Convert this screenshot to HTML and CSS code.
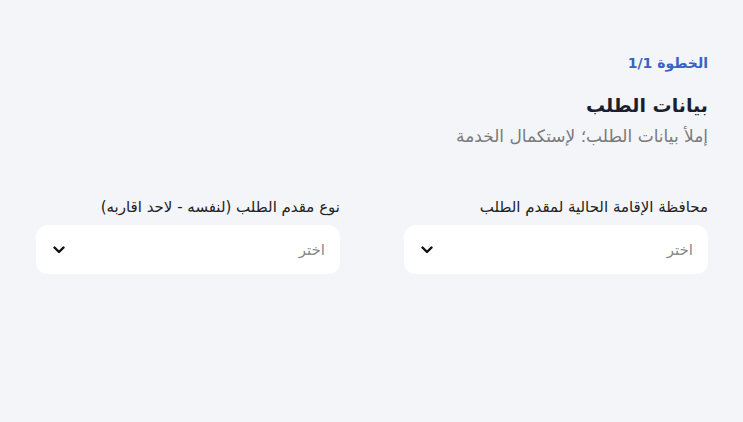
FILE: index.html
```html
<!DOCTYPE html>
<html lang="ar" dir="rtl">
<head>
<meta charset="utf-8">
<link rel="stylesheet" href="styles.css">
</head>
<body>
<main class="page">
  <div class="step">الخطوة 1/1</div>
  <h1 class="title">بيانات الطلب</h1>
  <p class="subtitle">إملأ بيانات الطلب؛ لإستكمال الخدمة</p>
  <div class="fields">
    <div class="field">
      <label class="label">محافظة الإقامة الحالية لمقدم الطلب</label>
      <div class="select">
        <span class="placeholder">اختر</span>
        <svg class="chev" width="12" height="8" viewBox="0 0 12 8"><path d="M1.5 1.5 L6 6 L10.5 1.5" fill="none" stroke="#111" stroke-width="2.4" stroke-linecap="round" stroke-linejoin="round"/></svg>
      </div>
    </div>
    <div class="field">
      <label class="label">نوع مقدم الطلب (لنفسه - لاحد اقاربه)</label>
      <div class="select">
        <span class="placeholder">اختر</span>
        <svg class="chev" width="12" height="8" viewBox="0 0 12 8"><path d="M1.5 1.5 L6 6 L10.5 1.5" fill="none" stroke="#111" stroke-width="2.4" stroke-linecap="round" stroke-linejoin="round"/></svg>
      </div>
    </div>
  </div>
</main>
</body>
</html>
```
FILE: styles.css
```css
html, body {
  margin: 0;
  padding: 0;
  background: #f4f5f9;
}
body {
  font-family: "DejaVu Sans", "Noto Sans", sans-serif;
  color: #1b1f2e;
}
.page {
  padding: 52px 35px 0 35px;
}
.step {
  color: #3a62c4;
  font-weight: bold;
  font-size: 14px;
  line-height: 22px;
}
.title {
  margin: 16px 0 0 0;
  font-size: 19px;
  line-height: 30px;
  font-weight: bold;
  color: #1b1f2e;
}
.subtitle {
  margin: 3px 0 0 0;
  font-size: 17px;
  line-height: 26px;
  color: #7a7a7a;
}
.fields {
  display: grid;
  grid-template-columns: 304px 304px;
  column-gap: 64px;
  margin-top: 48px;
}
.field {
  display: flex;
  flex-direction: column;
}
.label {
  font-size: 15px;
  line-height: 20px;
  color: #222;
}
.select {
  margin-top: 8px;
  height: 49px;
  background: #fff;
  border-radius: 12px;
  display: flex;
  align-items: center;
  justify-content: space-between;
  padding: 0 15px 0 17px;
}
.placeholder {
  font-size: 15px;
  color: #8a8a8a;
}
.chev {
  display: block;
}
```
